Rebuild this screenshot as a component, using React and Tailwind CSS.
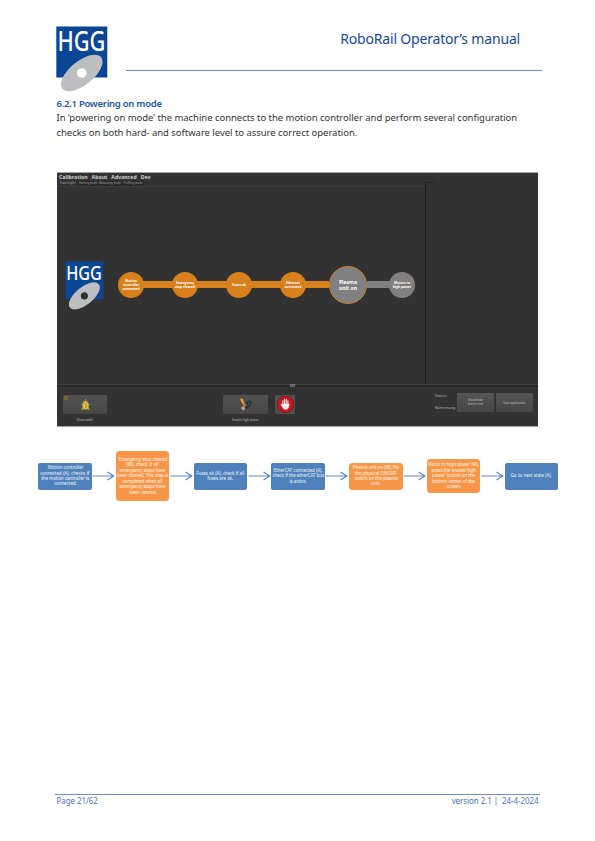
import React from "react";

function Logo({ className, hole }) {
  return (
    <svg className={"overflow-visible " + className} viewBox="0 0 52 66">
      <rect x="0.3" y="0.5" width="51" height="51" fill="#0b4596" />
      <text x="1.4" y="24.9" fontFamily="Noto Sans" fontSize="27.5" fontWeight="500" fill="#fff" textLength="48" lengthAdjust="spacingAndGlyphs">HGG</text>
      <ellipse cx="25.8" cy="47" rx="25" ry="11.9" fill="#bcbec0" transform="rotate(-39 25.8 47)" />
      <circle cx="25.8" cy="47" r="4.8" fill={hole} />
    </svg>
  );
}

function Node({ lines }) {
  return (
    <div className="flex h-[26px] w-[26px] shrink-0 flex-col items-center justify-center rounded-full bg-[#d7801c] font-['Noto_Sans',sans-serif] text-[3.3px] leading-[4px] font-bold whitespace-nowrap text-white">
      {lines.map((l) => <span key={l}>{l}</span>)}
    </div>
  );
}

const Link = () => <div className="-mx-px h-[7px] w-[30px] shrink-0 bg-[#d7801c]" />;

const steps = [
  { h: 27, blue: true, lines: [["Motion controller", 34], ["connected (A), checks if", 49], ["the motion controller is", 47], ["connected.", 21]] },
  { h: 50, blue: false, lines: [["Emergency stop cleared", 48], ["(M), check if all", 32], ["emergency stops have", 46], ["been cleared. This step is", 51], ["completed when all", 40], ["emergency stops have", 46], ["been cleared.", 26]] },
  { h: 27, blue: true, lines: [["Fuses ok (A), check if all", 48], ["fuses are ok.", 26]] },
  { h: 27, blue: true, lines: [["EtherCAT connected (A),", 49], ["check if the etherCAT bus", 51], ["is active.", 17]] },
  { h: 27, blue: false, lines: [["Plasma unit on (M), flip", 46], ["the physical ON/OFF", 42], ["switch on the plasma", 42], ["unit.", 9]] },
  { h: 34, blue: false, lines: [["Motor in high power (M),", 51], ["press the ‘enable high", 44], ["power’ button on the", 43], ["bottom center of the", 43], ["screen.", 14]] },
  { h: 27, blue: true, lines: [["Go to next state (A).", 41]] },
];

function Flow() {
  return (
    <div className="ml-[38px] mt-[23px] flex h-[52px] w-[520px] items-center justify-between">
      {steps.map((s, i) => (
        <React.Fragment key={i}>
          {i > 0 && (
            <svg className="h-[10px] w-[23px] shrink-0" viewBox="0 0 23 10" fill="none" stroke="#6189c5" strokeWidth="1.2">
              <path d="M.5 5H21.5M15.5 1L21.8 5L15.5 9" />
            </svg>
          )}
          <div
            className={"flex w-[53.5px] shrink-0 flex-col items-center justify-center font-['Noto_Sans',sans-serif] text-[4.35px] leading-[5.4px] text-white/90 " + (s.blue ? "rounded-[2px] bg-[#4f81bd]" : "rounded-[3.5px] bg-[#f79646]")}
            style={{ height: s.h }}
          >
            {s.lines.map(([t, w], j) => (
              <div key={j} className="whitespace-nowrap [text-align-last:justify]" style={{ width: w }}>{t}</div>
            ))}
          </div>
        </React.Fragment>
      ))}
    </div>
  );
}

function Machine() {
  return (
    <div className="ml-[57px] mt-[32px] flex h-[255px] w-[481px] flex-col border-y border-[#a5a5a5] bg-[#323232] font-['Noto_Sans',sans-serif] text-[#bdbdbd]">
      <div className="flex h-[211px]">
        <div className="flex w-[368px] shrink-0 flex-col">
          <div className="flex h-[8px] items-center gap-[4px] pl-[2px] font-['Noto_Sans',sans-serif] text-[5.2px] leading-[8px] font-bold text-[#cfcfcf]">
            <span>Calibration</span><span>About</span><span>Advanced</span><span>Dev</span>
          </div>
          <div className="flex h-[6px] items-center gap-px border-b border-[#3c3c3c] pl-px text-[2.7px] leading-[5px] text-[#a0a0a0]">
            <span className="w-[19px] text-center">PoweringOn</span>
            <span className="w-[20px] bg-[#292929] text-center">Homing mode</span>
            <span className="w-[22px] bg-[#292929] text-center">Measuring mode</span>
            <span className="w-[22px] bg-[#292929] text-center">Profiling mode</span>
          </div>
          <div className="flex pt-[74px] pl-[8px]">
            <Logo className="h-[49px] w-[39px] shrink-0" hole="#323232" />
            <div className="ml-[14px] flex h-[47px] items-center">
              <Node lines={["Motion", "controller", "connected"]} />
              <Link />
              <Node lines={["Emergency", "stop cleared"]} />
              <Link />
              <Node lines={["Fuses ok"]} />
              <Link />
              <Node lines={["Ethercat", "connected"]} />
              <div className="-ml-px h-[7px] w-[24px] shrink-0 bg-[#d7801c]" />
              <div className="flex h-[38px] w-[38px] shrink-0 flex-col items-center justify-center rounded-full border border-[#cf8022] bg-[#808080] text-[5px] leading-[6px] font-bold text-white">
                <span>Plasma</span><span>unit on</span>
              </div>
              <div className="-mr-px h-[7px] w-[23px] shrink-0 bg-[#808080]" />
              <div className="flex h-[26px] w-[26px] shrink-0 flex-col items-center justify-center rounded-full bg-[#808080] text-[3.3px] leading-[4px] font-bold whitespace-nowrap text-white">
                <span>Motors in</span><span>high power</span>
              </div>
            </div>
          </div>
        </div>
        <div className="mt-[8px] flex-1 border-l border-[#202020] pl-px text-[2.5px] leading-[3px] text-[#151515]">Details</div>
      </div>
      <div className="flex h-[3px] shrink-0 items-center border-t border-[#414141] bg-[#292929] pl-[233px] text-[2.6px] leading-[2px] text-[#ddd]">EXIT</div>
      <div className="flex h-[38px] items-start pt-[8px]">
        <div className="ml-[6px] flex w-[44px] flex-col items-center">
          <div className="flex h-[19px] w-[44px] rounded-[1px] bg-gradient-to-b from-[#525252] to-[#464646]">
            <span className="m-[0.5px] h-[4.5px] w-[4.5px] shrink-0 rounded-full border-[0.5px] border-[#85842c] bg-[#52521b]" />
            <svg className="mt-[4px] ml-[11px] h-[12px] w-[11px]" viewBox="0 0 11 12">
              <path d="M5.2 0H5.8V2H5.2Z" fill="#c3b777" />
              <path d="M5.5 1.5L7.6 2.6L8.4 4.4L10.2 5.4L8.8 6.4L8.8 8.6L9.8 11.4L7.5 10.4H3.5L1.2 11.4L2.2 8.6V6.4L.8 5.4L2.6 4.4L3.4 2.6Z" fill="#b09a35" />
              <ellipse cx="5.6" cy="6.4" rx="2.6" ry="3.6" fill="#dcbf3e" />
              <path d="M5 4.6L6.6 6.4L5.4 8.8" fill="none" stroke="#8c741e" strokeWidth=".8" />
            </svg>
          </div>
          <span className="mt-[4px] text-[3px] leading-[4px] whitespace-nowrap">Show width</span>
        </div>
        <div className="ml-[116px] flex w-[45px] flex-col items-center">
          <div className="flex h-[19px] w-[45px] items-center justify-center rounded-[1px] bg-gradient-to-b from-[#525252] to-[#464646]">
            <svg className="h-[13px] w-[13px]" viewBox="0 0 13 13" fill="none">
              <path d="M.8 .6L4 1L5.2 5.8L3.6 6.3Z" fill="#f0a321" />
              <path d="M4.3 5.7L6.2 8" stroke="#e8891d" strokeWidth="1.6" />
              <path d="M1.5 10L5 8L6.6 10.2L4.4 12.4Z" fill="#b2a69b" />
              <path d="M6.4 10.6L10 8.2L12 4.4L10.7 3L7.8 4.2L8.6 6.4" stroke="#262a2f" strokeWidth="1.3" />
              <path d="M4.7 8.8L6 10.5" stroke="#ef7d22" strokeWidth="1" />
            </svg>
          </div>
          <span className="mt-[4px] text-[3px] leading-[4px] whitespace-nowrap">Enable high power</span>
        </div>
        <div className="ml-[7px] flex h-[19px] w-[20px] items-center justify-center rounded-[1px] bg-[#505050]">
          <svg className="h-[17px] w-[17px]" viewBox="0 0 17 17">
            <path d="M5 .5H12L16.5 5V12L12 16.5H5L.5 12V5Z" fill="#c5171b" stroke="#71191a" strokeWidth=".7" />
            <path d="M5.8 9V4.8M7.5 8V3.2M9.2 8V3.4M10.9 9V4.8M4.2 8.6L6.4 11.3M12.2 8.2L11 11.6" stroke="#eee" strokeWidth="1.1" strokeLinecap="round" />
            <path d="M5.4 7.8H11.5V10.8L10.3 13.6H7L5.2 11Z" fill="#eee" />
          </svg>
        </div>
        <div className="-mt-[1.5px] ml-[140px] flex h-[16px] w-[22px] flex-col justify-between text-[2.6px] leading-[4px] whitespace-nowrap">
          <span>Power on</span><span>Machine moving</span>
        </div>
        <div className="-mt-[2px] flex h-[19px] w-[37px] flex-col items-center justify-center rounded-[1px] bg-gradient-to-b from-[#555] to-[#454545] text-[3px] leading-[3.7px]">
          <span>Show/hide</span><span>button text</span>
        </div>
        <div className="-mt-[2px] ml-[2px] flex h-[19px] w-[37px] items-center justify-center rounded-[1px] bg-gradient-to-b from-[#555] to-[#454545] text-[3px] leading-[4px]">Quit application</div>
      </div>
    </div>
  );
}

export default function App() {
  return (
    <div className="flex h-[841px] w-[595px] flex-col overflow-hidden bg-white font-['Noto_Sans',sans-serif]">
      <header className="flex h-[96px] shrink-0 pt-[26px] pl-[55.5px]">
        <Logo className="h-[66px] w-[52px] shrink-0" hole="#fff" />
        <div className="ml-[18.5px] h-[45px] w-[416px] border-b border-[#6d8fc8] pt-[2px] pr-[22px] text-right text-[14px] leading-[22px] tracking-[-0.18px] whitespace-nowrap text-[#17479e]">
          RoboRail Operator’s manual
        </div>
      </header>
      <div className="ml-[56.5px] h-[44px] shrink-0 pt-[1px] text-[9.5px] leading-[14.3px] tracking-[-0.035px] whitespace-nowrap text-[#333]">
        <h1 className="text-[9.5px] font-semibold tracking-[-0.27px] text-[#2457a7]">6.2.1 Powering on mode</h1>
        <p>In ‘powering on mode’ the machine connects to the motion controller and perform several configuration</p>
        <p>checks on both hard- and software level to assure correct operation.</p>
      </div>
      <Machine />
      <Flow />
      <footer className="mt-auto mr-[55px] mb-[33px] ml-[55px] flex h-[14px] justify-between border-t border-[#6d8fc8] pr-[1.5px] pl-[1.5px] text-[8px] leading-[12px] tracking-[-0.08px] text-[#4a75b5]">
        <span>Page 21/62</span>
        <span className="whitespace-pre">version 2.1 |  24-4-2024</span>
      </footer>
    </div>
  );
}
